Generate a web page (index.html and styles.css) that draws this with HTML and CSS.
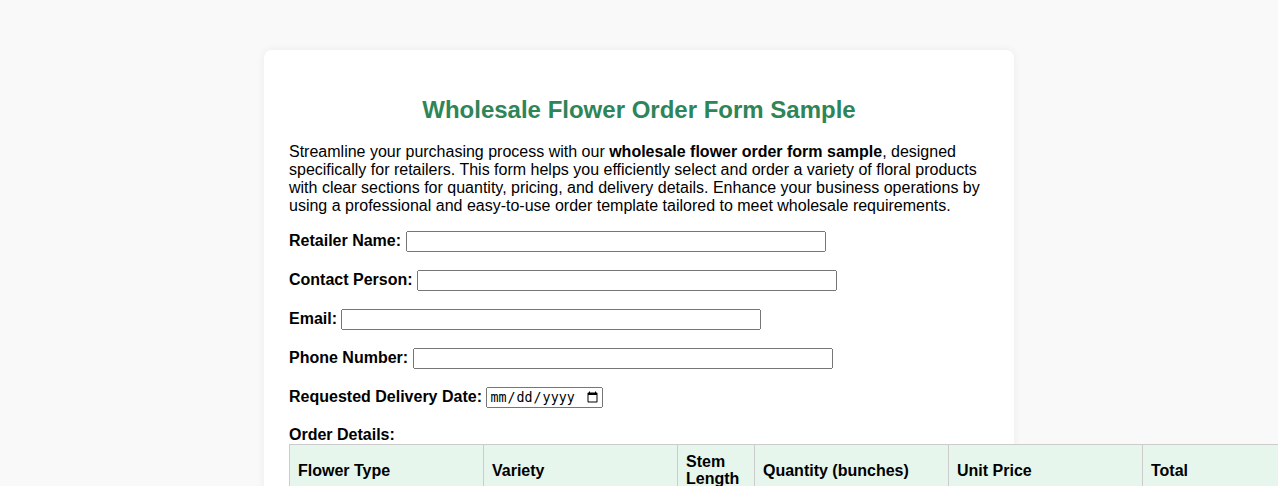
FILE: index.html
```html
<!DOCTYPE html>
<html lang="en">
<head>
<meta charset="utf-8">
<title>Wholesale Flower Order Form Sample</title>
<link rel="stylesheet" href="styles.css">
</head>
<body>
<div class="container">
  <h1>Wholesale Flower Order Form Sample</h1>
  <p>Streamline your purchasing process with our <strong>wholesale flower order form sample</strong>, designed specifically for retailers. This form helps you efficiently select and order a variety of floral products with clear sections for quantity, pricing, and delivery details. Enhance your business operations by using a professional and easy-to-use order template tailored to meet wholesale requirements.</p>
  <form>
    <div class="form-group"><label for="retailer">Retailer Name:</label> <input type="text" id="retailer" class="text-input"></div>
    <div class="form-group"><label for="contact">Contact Person:</label> <input type="text" id="contact" class="text-input"></div>
    <div class="form-group"><label for="email">Email:</label> <input type="email" id="email" class="text-input"></div>
    <div class="form-group"><label for="phone">Phone Number:</label> <input type="tel" id="phone" class="text-input"></div>
    <div class="form-group"><label for="date">Requested Delivery Date:</label> <input type="date" id="date" class="date-input"></div>
    <div class="order-group">
      <label class="block-label">Order Details:</label>
      <table class="order-table">
        <thead>
          <tr>
            <th class="col-wide">Flower Type</th>
            <th class="col-wide">Variety</th>
            <th class="col-narrow">Stem Length</th>
            <th class="col-wide">Quantity (bunches)</th>
            <th class="col-wide">Unit Price</th>
            <th class="col-wide">Total</th>
          </tr>
        </thead>
        <tbody>
          <tr>
            <td><input type="text" class="cell-input"></td>
            <td><input type="text" class="cell-input"></td>
            <td><input type="text" class="cell-input"></td>
            <td><input type="number" class="cell-input"></td>
            <td><input type="number" class="cell-input"></td>
            <td><input type="number" class="cell-input"></td>
          </tr>
        </tbody>
      </table>
    </div>
  </form>
</div>
</body>
</html>
```
FILE: styles.css
```css
body {
  margin: 0;
  background: #f9f9f9;
  font-family: "Liberation Sans", Arial, sans-serif;
  font-size: 16px;
  color: #000;
}
.container {
  width: 700px;
  margin: 50px auto;
  padding: 25px;
  background: #fff;
  border-radius: 8px;
  box-shadow: 0 0 10px rgba(0, 0, 0, 0.06);
}
h1 {
  color: #2e8558;
  text-align: center;
  font-size: 24px;
  margin: 21px 0 19px;
}
p {
  margin: 0 0 16px;
}
.form-group {
  margin-bottom: 18px;
}
label {
  font-weight: bold;
}
.block-label {
  display: block;
}
.text-input {
  width: 60%;
  box-sizing: border-box;
}
.date-input {
  width: 117px;
  box-sizing: border-box;
}
.order-table {
  border-collapse: collapse;
}
.order-table th,
.order-table td {
  border: 1px solid #ccc;
  padding: 8px;
  text-align: left;
}
.order-table th {
  background: #e6f6ec;
  height: 25px;
  line-height: 17px;
}
.col-wide {
  width: 177px;
  min-width: 177px;
}
.col-narrow {
  width: 60px;
  min-width: 60px;
}
.cell-input {
  width: 100%;
  box-sizing: border-box;
}
```
